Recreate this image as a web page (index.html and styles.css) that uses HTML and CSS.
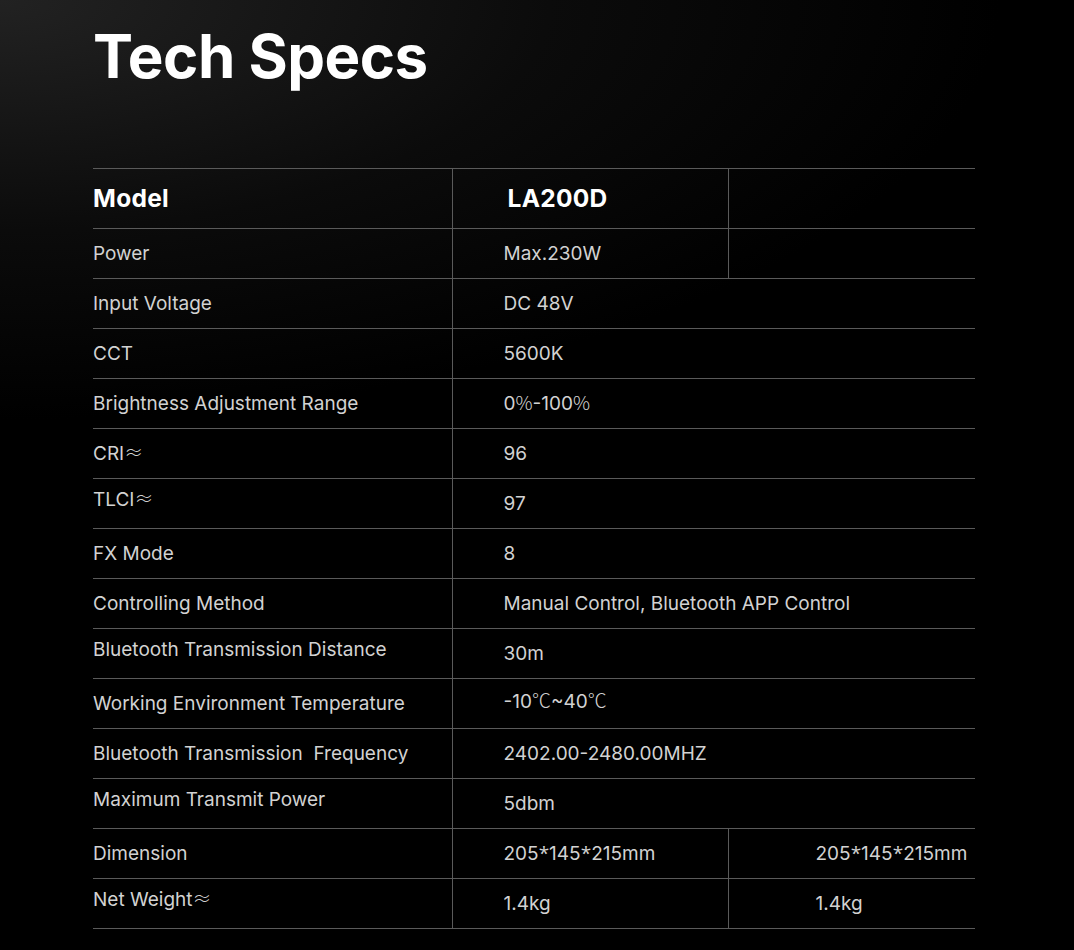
FILE: index.html
```html
<!DOCTYPE html>
<html lang="en">
<head>
<meta charset="utf-8">
<title>Tech Specs</title>
<link rel="stylesheet" href="styles.css">
</head>
<body>
<main class="page">
  <h1 class="title">Tech Specs</h1>
  <table class="specs">
    <colgroup>
      <col class="c-label">
      <col class="c-val">
      <col class="c-val2">
    </colgroup>
    <tr class="head">
      <th class="label">Model</th>
      <th class="val model">LA200D</th>
      <th class="val2"></th>
    </tr>
    <tr><td class="label">Power</td><td class="val">Max.230W</td><td class="val2"></td></tr>
    <tr><td class="label">Input Voltage</td><td class="val" colspan="2">DC 48V</td></tr>
    <tr><td class="label">CCT</td><td class="val" colspan="2">5600K</td></tr>
    <tr><td class="label">Brightness Adjustment Range</td><td class="val" colspan="2">0<span class="cjk">%</span>-100<span class="cjk">%</span></td></tr>
    <tr><td class="label">CRI<span class="cjk">≈</span></td><td class="val" colspan="2">96</td></tr>
    <tr><td class="label up">TLCI<span class="cjk">≈</span></td><td class="val" colspan="2">97</td></tr>
    <tr><td class="label">FX Mode</td><td class="val" colspan="2">8</td></tr>
    <tr><td class="label">Controlling Method</td><td class="val" colspan="2">Manual Control, Bluetooth APP Control</td></tr>
    <tr><td class="label up">Bluetooth Transmission Distance</td><td class="val" colspan="2">30m</td></tr>
    <tr><td class="label">Working Environment Temperature</td><td class="val up-s" colspan="2">-10<span class="cjk">℃</span>~40<span class="cjk">℃</span></td></tr>
    <tr><td class="label">Bluetooth Transmission&nbsp; Frequency</td><td class="val" colspan="2">2402.00-2480.00MHZ</td></tr>
    <tr><td class="label up">Maximum Transmit Power</td><td class="val" colspan="2">5dbm</td></tr>
    <tr><td class="label">Dimension</td><td class="val">205<span class="ast">*</span>145<span class="ast">*</span>215mm</td><td class="val2">205<span class="ast">*</span>145<span class="ast">*</span>215mm</td></tr>
    <tr><td class="label up">Net Weight<span class="cjk">≈</span></td><td class="val">1.4kg</td><td class="val2">1.4kg</td></tr>
  </table>
</main>
</body>
</html>
```

FILE: styles.css
```css
html, body {
  margin: 0;
  padding: 0;
  height: 100%;
}

body {
  background: #000;
  color: #d2d2d2;
  font-family: Inter, "Open Sans", "Liberation Sans", sans-serif;
}

.page {
  min-height: 950px;
  box-sizing: border-box;
  padding: 18px 99px 0 93px;
  background: radial-gradient(ellipse 1000px 420px at 0 0, #222 0%, #0b0b0b 55%, #000 100%);
}

.title {
  margin: 0;
  font-size: 60px;
  line-height: 76px;
  font-weight: 700;
  color: #fff;
  letter-spacing: -0.5px;
}

.specs {
  margin-top: 74px;
  width: 882px;
  border-collapse: collapse;
  table-layout: fixed;
  border-top: 1px solid #5a5a5a;
}

.c-label { width: 359px; }
.c-val { width: 276px; }
.c-val2 { width: 247px; }

.specs tr {
  height: 50px;
  border-bottom: 1px solid #5a5a5a;
}

.specs tr.head {
  height: 60px;
}

.specs th,
.specs td {
  padding: 0;
  text-align: left;
  vertical-align: middle;
  font-size: 19px;
  line-height: 24px;
  font-weight: 400;
  white-space: nowrap;
}

.specs .val,
.specs .val2 {
  border-left: 1px solid #5a5a5a;
}

.specs .val { padding-left: 51px; }
.specs .val2 { padding-left: 87px; }

.specs .head th {
  font-size: 24.5px;
  line-height: 30px;
  font-weight: 700;
  color: #fff;
  padding-bottom: 2px;
  letter-spacing: 0.3px;
}

.specs .head .model { padding-left: 55px; }

.specs .up { padding-bottom: 8px; }
.specs .up-s { padding-bottom: 4px; }

.cjk {
  font-family: "Noto Sans CJK SC", sans-serif;
  font-weight: 300;
  line-height: 0;
}

.ast {
  font-family: "Open Sans", sans-serif;
  line-height: 0;
}
```
